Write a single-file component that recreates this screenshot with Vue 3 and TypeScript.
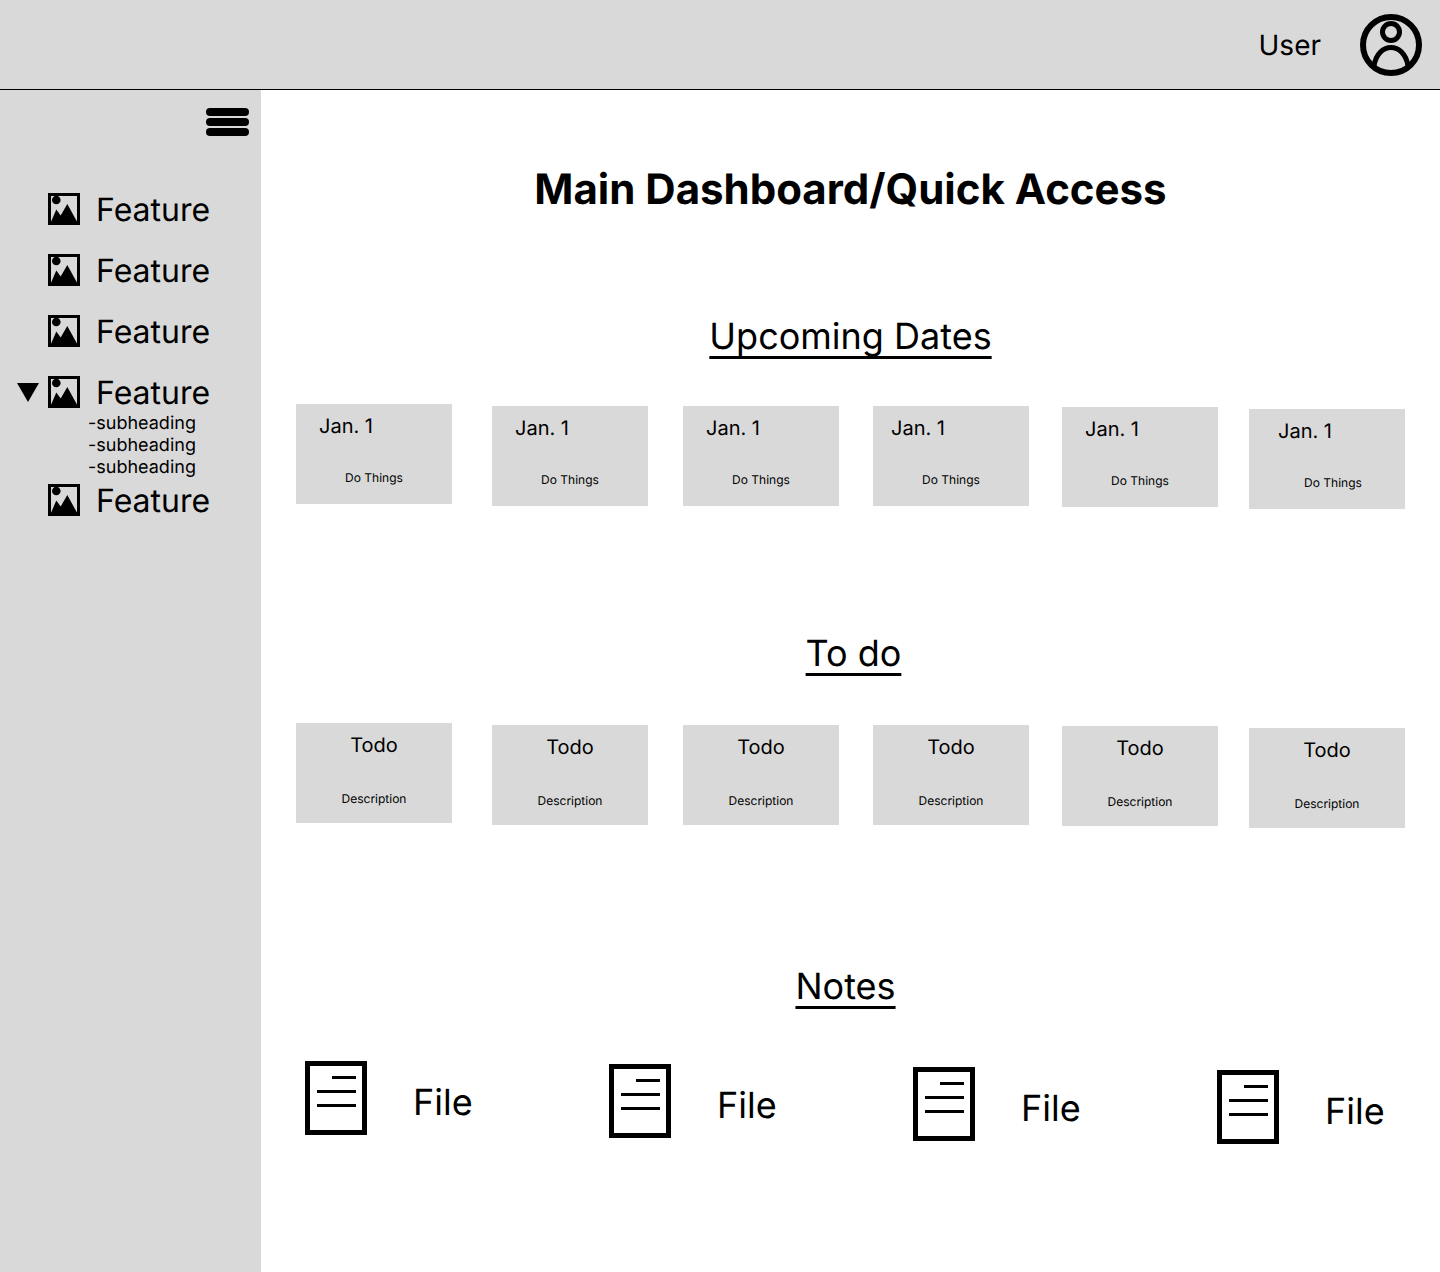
<script setup lang="ts">
// gap is the space before each card, drift the small shift down from the row top
const dates = [
  { gap: 0, drift: 0, textLeft: 23, subLeft: 0 },
  { gap: 40, drift: 2, textLeft: 23, subLeft: 0 },
  { gap: 35, drift: 2, textLeft: 23, subLeft: 0 },
  { gap: 34, drift: 2, textLeft: 18, subLeft: 0 },
  { gap: 33, drift: 3, textLeft: 23, subLeft: 0 },
  { gap: 31, drift: 5, textLeft: 29, subLeft: 12 },
];

const features = [
  { name: "Feature", open: false },
  { name: "Feature", open: false },
  { name: "Feature", open: false },
  { name: "Feature", open: true },
  { name: "Feature", open: false },
];

const subheadings = ["-subheading", "-subheading", "-subheading"];
const files = [0, 3, 6, 9];
</script>

<template>
  <div class="page">
    <header class="topbar">
      <span class="user-name">User</span>
      <svg class="avatar" width="62" height="62" viewBox="0 0 62 62" fill="none" stroke="#000">
        <circle cx="31" cy="31" r="28" stroke-width="6" />
        <circle cx="31" cy="18" r="8.500" stroke-width="5" />
        <path d="M14 52C16 39 24 33.500 31 33.500S46 39 48 52" stroke-width="5" />
      </svg>
    </header>

    <div class="body">
      <aside class="sidebar">
        <div class="menu-row">
          <div class="menu-btn">
            <span></span>
            <span></span>
            <span></span>
          </div>
        </div>

        <nav class="nav">
          <div v-for="(item, i) in features" :key="i" class="nav-item">
            <div class="nav-row">
              <span class="caret-slot">
                <span v-if="item.open" class="caret"></span>
              </span>
              <svg class="pic" width="32" height="32" viewBox="0 0 32 32">
                <rect x="1.500" y="1.500" width="29" height="29" fill="none" stroke="#000" stroke-width="3" />
                <circle cx="8.300" cy="7" r="4.300" fill="#000" />
                <path d="M2.500 30L8.300 16.500L12.700 22.500L19.300 11L29.500 29.500V30Z" fill="#000" />
              </svg>
              <span class="nav-label">{{ item.name }}</span>
            </div>
            <ul v-if="item.open" class="subs">
              <li v-for="(sub, j) in subheadings" :key="j">{{ sub }}</li>
            </ul>
          </div>
        </nav>
      </aside>

      <main class="main">
        <h1 class="title">Main Dashboard/Quick Access</h1>

        <h2 class="section upcoming">Upcoming Dates</h2>
        <div class="cards dates-row">
          <div
            v-for="(d, i) in dates"
            :key="i"
            class="card"
            :style="{ marginLeft: d.gap + 'px', marginTop: d.drift + 'px' }"
          >
            <div class="card-head" :style="{ paddingLeft: d.textLeft + 'px' }">Jan. 1</div>
            <div class="card-sub" :style="{ paddingLeft: d.subLeft + 'px' }">Do Things</div>
          </div>
        </div>

        <h2 class="section todo">To do</h2>
        <div class="cards todo-row">
          <div
            v-for="(d, i) in dates"
            :key="i"
            class="card"
            :style="{ marginLeft: d.gap + 'px', marginTop: d.drift + 'px' }"
          >
            <div class="card-head center">Todo</div>
            <div class="card-sub desc">Description</div>
          </div>
        </div>

        <h2 class="section notes">Notes</h2>
        <div class="files">
          <div v-for="drift in files" :key="drift" class="file" :style="{ marginTop: drift + 'px' }">
            <svg width="62" height="74" viewBox="0 0 62 74" fill="none" stroke="#000">
              <rect x="2.500" y="2.500" width="57" height="69" stroke-width="5" />
              <path d="M27 16.500H51M12 30.500H51M12 44.500H51" stroke-width="3" />
            </svg>
            <span class="file-name">File</span>
          </div>
        </div>
      </main>
    </div>
  </div>
</template>

<style>
body {
  background: #fff;
}
</style>

<style scoped>
.page {
  width: 1440px;
  height: 1272px;
  font-family: Inter, "Liberation Sans", sans-serif;
  color: #000;
  overflow: hidden;
  text-rendering: geometricPrecision;
}

.topbar {
  height: 89px;
  background: #d9d9d9;
  border-bottom: 1px solid #000;
  display: flex;
  justify-content: flex-end;
  align-items: center;
  padding-right: 18px;
}

.user-name {
  font-size: 28px;
  margin-right: 39px;
}

.body {
  display: flex;
  height: 1182px;
}

/* sidebar */
.sidebar {
  width: 261px;
  flex-shrink: 0;
  background: #d9d9d9;
}

.menu-row {
  display: flex;
  justify-content: flex-end;
  padding: 18px 12px 0 0;
}

.menu-btn {
  width: 43px;
  display: flex;
  flex-direction: column;
  gap: 2px;
}

.menu-btn span {
  height: 8px;
  border-radius: 4px;
  background: #000;
}

.nav {
  margin-top: 57px;
  padding-left: 17px;
  display: flex;
  flex-direction: column;
  gap: 29px;
}

.nav-row {
  display: flex;
  align-items: center;
  height: 32px;
}

.caret-slot {
  width: 31px;
  flex-shrink: 0;
}

.caret {
  display: block;
  width: 0;
  height: 0;
  border-left: 11px solid transparent;
  border-right: 11px solid transparent;
  border-top: 19px solid #000;
}

.nav-label {
  font-size: 32px;
  line-height: 32px;
  margin: 2px 0 0 16px;
}

.subs {
  list-style: none;
  margin: 5px 0 -24px 71px;
  padding: 0;
  font-size: 18px;
  line-height: 22px;
}

/* main content */
.main {
  flex: 1;
  min-width: 0;
}

.title {
  margin: 76px 0 0;
  font-size: 42px;
  line-height: 48px;
  font-weight: 700;
  text-align: center;
}

.section {
  margin: 0;
  font-size: 36px;
  line-height: 44px;
  font-weight: 400;
  text-align: center;
  text-decoration: underline;
  text-decoration-thickness: 2.5px;
  text-decoration-skip-ink: none;
  text-underline-offset: 7px;
}

.upcoming {
  margin-top: 100px;
}

.todo {
  margin-top: 122px;
  padding-left: 6px;
}

.notes {
  margin-top: 136px;
  padding-right: 10px;
}

.cards {
  display: flex;
  align-items: flex-start;
  height: 105px;
  margin-top: 46px;
  padding-left: 35px;
}

.todo-row {
  margin-top: 48px;
}

.card {
  width: 156px;
  height: 100px;
  flex-shrink: 0;
  background: #d9d9d9;
}

.card-head {
  margin-top: 10px;
  font-size: 20px;
  line-height: 24px;
}

.center {
  text-align: center;
}

.card-sub {
  margin-top: 32px;
  font-size: 12px;
  line-height: 15px;
  text-align: center;
}

.desc {
  margin-top: 34px;
}

.files {
  display: flex;
  align-items: flex-start;
  margin-top: 53px;
  padding-left: 44px;
}

.file {
  width: 304px;
  display: flex;
  align-items: center;
  flex-shrink: 0;
}

.file-name {
  margin: 8px 0 0 46px;
  font-size: 36px;
  line-height: 44px;
}
</style>
